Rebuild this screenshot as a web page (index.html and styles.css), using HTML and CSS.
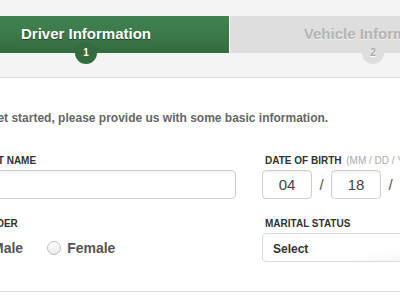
FILE: index.html
```html
<!DOCTYPE html>
<html lang="en">
<head>
  <meta charset="UTF-8">
  <meta name="viewport" content="width=device-width, initial-scale=1.0">
  <title>Get a Quote</title>
  <link rel="stylesheet" href="styles.css">
</head>
<body>

<div class="page">
  <div class="steps">
    <div class="step active">
      Driver Information
      <span class="step-num">1</span>
    </div>
    <div class="step">
      Vehicle Information
      <span class="step-num">2</span>
    </div>
  </div>

  <form class="quote-form">
    <p class="intro">To get started, please provide us with some basic information.</p>

    <div class="form-row">
      <div class="form-group">
        <label for="firstName">First Name</label>
        <input type="text" id="firstName" class="text-input">
      </div>
      <div class="form-group">
        <label>Date of Birth <span class="hint">(MM / DD / YYYY)</span></label>
        <div class="dob">
          <input type="text" class="text-input date-input" value="04">
          <span class="sep">/</span>
          <input type="text" class="text-input date-input" value="18">
          <span class="sep">/</span>
          <input type="text" class="text-input date-input" value="1985">
        </div>
      </div>
    </div>

    <div class="form-row">
      <div class="form-group">
        <label>Gender</label>
        <div class="radios">
          <span class="radio-option"><span class="radio"></span>Male</span>
          <span class="radio-option"><span class="radio"></span>Female</span>
        </div>
      </div>
      <div class="form-group">
        <label>Marital Status</label>
        <div class="select">Select</div>
      </div>
    </div>
  </form>
</div>

</body>
</html>
```

FILE: styles.css
```css
/* Basic Page Styling */
body {
  margin: 0;
  font-family: "Liberation Sans", Arial, sans-serif;
  background-color: #fff;
  overflow: hidden;
}

/* page is wider than the window, shifted left */
.page {
  width: 700px;
  margin-left: -57px;
}

/* Step Tabs */
.steps {
  display: flex;
  padding: 16px 0 24px;
  background-color: #f4f4f4;
  border-bottom: 1px solid #dddddd;
}

.step {
  position: relative;
  width: 286px;
  height: 37px;
  line-height: 35px;
  text-align: center;
  font-size: 15px;
  font-weight: bold;
  color: #b3b3b3;
  background-color: #dedede;
  border-left: 1px solid #fff;
  text-shadow: 0 1px 0 rgba(255, 255, 255, 0.6);
}

.step.active {
  color: #fff;
  background: linear-gradient(#418352, #3a7748 60%, #336a3f);
  border-left: none;
  text-shadow: 0 1px 1px rgba(0, 0, 0, 0.45);
}

.step-num {
  position: absolute;
  left: 50%;
  top: 26px;
  width: 22px;
  height: 22px;
  margin-left: -11px;
  border-radius: 50%;
  background-color: #dedede;
  color: #a9a9a9;
  font-size: 10px;
  line-height: 22px;
  text-shadow: 0 1px 0 #fff;
}

.step.active .step-num {
  background-color: #346b40;
  color: #fff;
  text-shadow: none;
}

/* Form */
.quote-form {
  padding: 32px 0 29px 29px;
  border-bottom: 1px solid #dddddd;
}

.intro {
  margin: 0 0 29px;
  padding-left: 1px;
  font-size: 12px;
  line-height: 16px;
  font-weight: bold;
  color: #666;
}

.form-row {
  display: grid;
  grid-template-columns: 264px 1fr;
  column-gap: 26px;
}

.form-row + .form-row {
  margin-top: 19px;
}

.form-group label {
  display: block;
  padding-left: 3px;
  margin-bottom: 3px;
  font-size: 10px;
  line-height: 12px;
  font-weight: bold;
  text-transform: uppercase;
  color: #333;
  white-space: nowrap;
}

.hint {
  margin-left: 2px;
  font-size: 10px;
  font-weight: normal;
  color: #aaa;
}

.text-input {
  box-sizing: border-box;
  display: block;
  width: 100%;
  height: 29px;
  padding: 0 8px;
  border: 1px solid #cfcfcf;
  border-radius: 4px;
  box-shadow: inset 0 1px 2px rgba(0, 0, 0, 0.07);
  background-color: #fff;
  font-family: inherit;
  font-size: 15px;
  color: #444;
}

/* Date of birth */
.dob {
  display: flex;
  align-items: center;
}

.date-input {
  width: 50px;
  flex: none;
  text-align: center;
}

.sep {
  width: 19px;
  text-align: center;
  font-size: 15px;
  color: #555;
}

/* Gender radios */
.radios {
  display: flex;
  align-items: center;
  height: 29px;
}

.radio-option {
  display: flex;
  align-items: center;
  margin-right: 24px;
  font-size: 14px;
  font-weight: bold;
  color: #555;
}

.radio {
  box-sizing: border-box;
  width: 14px;
  height: 14px;
  margin-right: 6px;
  border: 1px solid #bdbdbd;
  border-radius: 50%;
  background: linear-gradient(#fff, #e9e9e9);
  box-shadow: inset 0 1px 1px #fff;
}

/* Marital status select */
.select {
  box-sizing: border-box;
  height: 29px;
  line-height: 30px;
  padding-left: 10px;
  border: 1px solid #dcdcdc;
  border-radius: 4px;
  background: linear-gradient(170deg, #fff 40%, #f4f4f4 60%, #f9f9f9);
  font-size: 12px;
  font-weight: bold;
  color: #333;
}
```
